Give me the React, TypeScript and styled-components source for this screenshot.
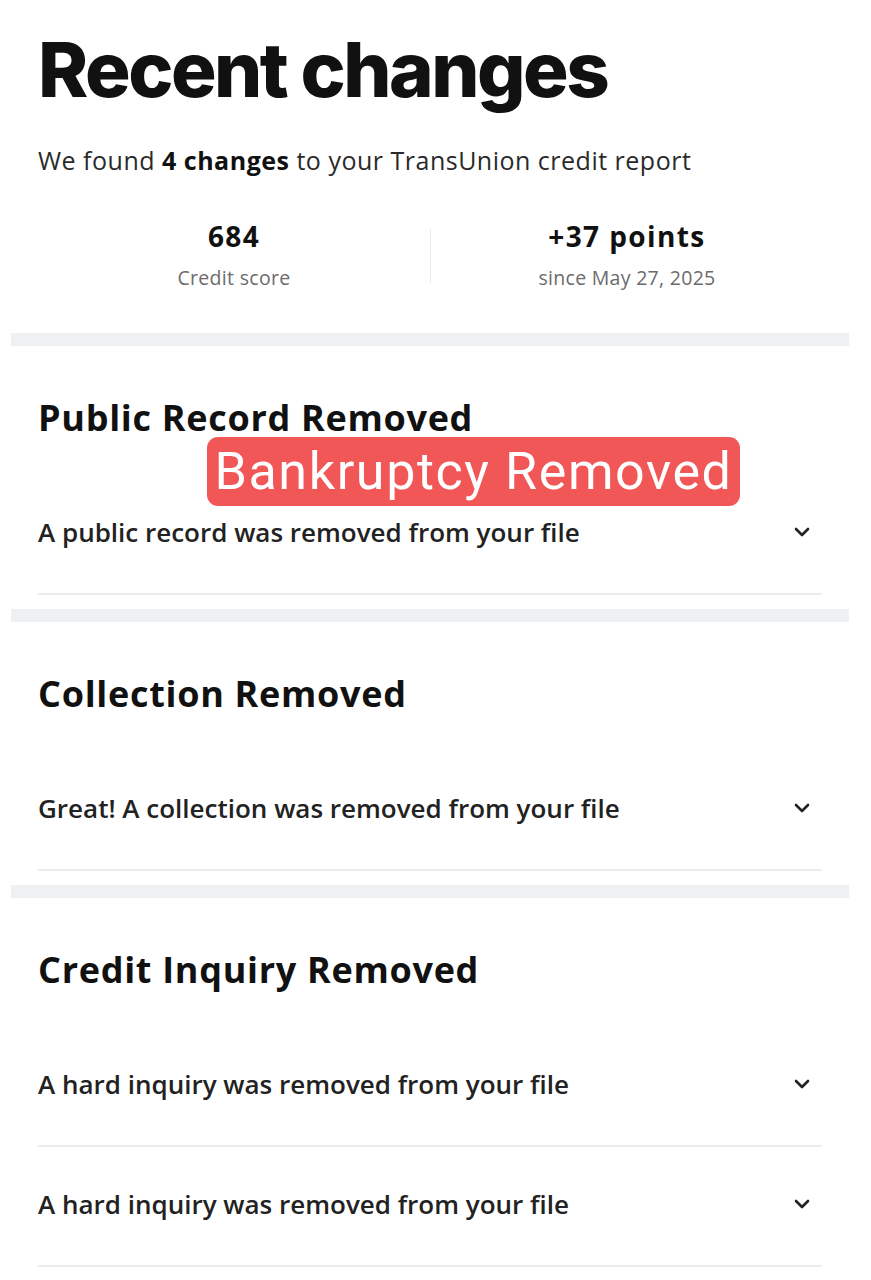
import React from "react";
import styled, { createGlobalStyle } from "styled-components";

const GlobalStyle = createGlobalStyle`
  html, body {
    margin: 0;
    padding: 0;
    background: #ffffff;
  }
  body {
    font-family: "Open Sans", "Noto Sans", sans-serif;
    color: #1a1a1a;
  }
`;

const Page = styled.div`
  width: 871px;
  padding-top: 28px;
  padding-bottom: 20px;
  box-sizing: border-box;
`;

const Intro = styled.header`
  padding: 0 38px 43px;
`;

const Title = styled.h1`
  margin: 0;
  font-family: Inter, Roboto, sans-serif;
  font-weight: 800;
  font-size: 76px;
  line-height: 82px;
  letter-spacing: -2.5px;
  color: #111;
`;

const Subtitle = styled.p`
  margin: 34px 0 0;
  font-size: 25px;
  line-height: 32px;
  letter-spacing: 0.5px;
  color: #2a2a2a;
  b {
    font-weight: 700;
    color: #111;
  }
`;

const Stats = styled.div`
  display: grid;
  grid-template-columns: 1fr 1px 1fr;
  margin: 45px 10px 0 0;
  align-items: center;
`;

const Stat = styled.div`
  display: flex;
  flex-direction: column;
  align-items: center;
  gap: 15px;
`;

const StatValue = styled.div`
  font-weight: 700;
  font-size: 28px;
  line-height: 30px;
  letter-spacing: 1.4px;
  color: #111;
`;

const StatLabel = styled.div`
  font-size: 19.5px;
  line-height: 24px;
  letter-spacing: 0.3px;
  color: #6b6b6b;
`;

const StatDivider = styled.div`
  height: 54px;
  background: #e8e8e8;
`;

const Band = styled.div`
  height: 13px;
  margin: 0 22px 0 11px;
  background: #eef0f2;
`;

const Section = styled.section`
  position: relative;
  padding: 52px 49px 14px 38px;
`;

const SectionTitle = styled.h2`
  margin: 0 0 37px;
  font-weight: 700;
  font-size: 36px;
  line-height: 40px;
  letter-spacing: 0.7px;
  color: #111;
`;

const Row = styled.div`
  display: flex;
  align-items: center;
  justify-content: space-between;
  height: 120px;
  padding-bottom: 4px;
  box-sizing: border-box;
  border-bottom: 2px solid #ececec;
`;

const RowText = styled.span`
  font-weight: 600;
  font-size: 26px;
  color: #222;
`;

const Chevron = styled.svg`
  width: 18px;
  height: 12px;
  margin-right: 11px;
  flex-shrink: 0;
`;

const Sticker = styled.div`
  position: absolute;
  left: 207px;
  top: 91px;
  width: 533px;
  height: 69px;
  border-radius: 11px;
  background: #f25757;
  color: #fff;
  font-family: Roboto, "Noto Sans", sans-serif;
  font-size: 52px;
  line-height: 69px;
  letter-spacing: 1.6px;
  text-align: center;
  font-weight: 400;
`;

const ChevronIcon = () => (
  <Chevron viewBox="0 0 18 12">
    <path
      d="M3 3l6 6 6-6"
      fill="none"
      stroke="#222"
      strokeWidth="2.6"
      strokeLinecap="round"
      strokeLinejoin="round"
    />
  </Chevron>
);

const sections = [
  {
    title: "Public Record Removed",
    rows: ["A public record was removed from your file"],
    sticker: "Bankruptcy Removed",
  },
  {
    title: "Collection Removed",
    rows: ["Great! A collection was removed from your file"],
  },
  {
    title: "Credit Inquiry Removed",
    rows: [
      "A hard inquiry was removed from your file",
      "A hard inquiry was removed from your file",
    ],
  },
];

export default function App() {
  return (
    <Page>
      <GlobalStyle />
      <Intro>
        <Title>Recent changes</Title>
        <Subtitle>
          We found <b>4 changes</b> to your TransUnion credit report
        </Subtitle>
        <Stats>
          <Stat>
            <StatValue>684</StatValue>
            <StatLabel>Credit score</StatLabel>
          </Stat>
          <StatDivider />
          <Stat>
            <StatValue>+37 points</StatValue>
            <StatLabel>since May 27, 2025</StatLabel>
          </Stat>
        </Stats>
      </Intro>
      {sections.map((section) => (
        <React.Fragment key={section.title}>
          <Band />
          <Section>
            <SectionTitle>{section.title}</SectionTitle>
            {section.rows.map((row, i) => (
              <Row key={i}>
                <RowText>{row}</RowText>
                <ChevronIcon />
              </Row>
            ))}
            {section.sticker && <Sticker>{section.sticker}</Sticker>}
          </Section>
        </React.Fragment>
      ))}
    </Page>
  );
}
